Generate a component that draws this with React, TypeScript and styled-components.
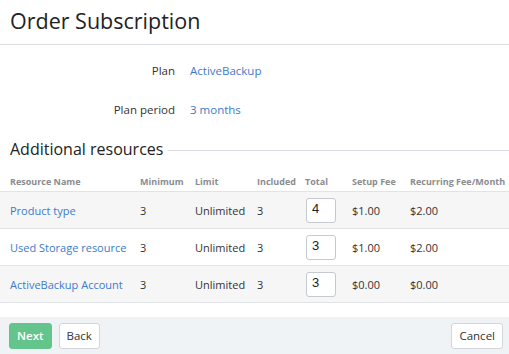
import React from 'react';
import styled, { createGlobalStyle } from "styled-components";

const GlobalStyle = createGlobalStyle`
  body {
    margin: 0;
    font-family: "Open Sans", "Liberation Sans", sans-serif;
    color: #333;
    background: #fff;
  }
`;

interface Resource {
  name: string;
  minimum: string;
  limit: string;
  included: string;
  total: string;
  setupFee: string;
  recurringFee: string;
}

const resources: Resource[] = [
  { name: "Product type", minimum: "3", limit: "Unlimited", included: "3", total: "4", setupFee: "$1.00", recurringFee: "$2.00" },
  { name: "Used Storage resource", minimum: "3", limit: "Unlimited", included: "3", total: "3", setupFee: "$1.00", recurringFee: "$2.00" },
  { name: "ActiveBackup Account", minimum: "3", limit: "Unlimited", included: "3", total: "3", setupFee: "$0.00", recurringFee: "$0.00" },
];

const App = () => {
  return (
    <Page>
      <GlobalStyle/>
      <Header>
        <Title>Order Subscription</Title>
      </Header>

      <Fields>
        <Field>
          <FieldLabel>Plan</FieldLabel>
          <Link>ActiveBackup</Link>
        </Field>
        <Field>
          <FieldLabel>Plan period</FieldLabel>
          <Link>3 months</Link>
        </Field>
      </Fields>

      <Section>
        <SectionTitle>Additional resources</SectionTitle>
        <SectionLine/>
      </Section>

      <Table>
        <HeadRow>
          <span>Resource Name</span>
          <span>Minimum</span>
          <span>Limit</span>
          <span>Included</span>
          <span>Total</span>
          <span>Setup Fee</span>
          <span>Recurring Fee/Month</span>
        </HeadRow>
        {resources.map((r, i) => (
          <Row key={r.name} $striped={i % 2 === 0}>
            <Link>{r.name}</Link>
            <span>{r.minimum}</span>
            <span>{r.limit}</span>
            <span>{r.included}</span>
            <span><TotalInput defaultValue={r.total}/></span>
            <span>{r.setupFee}</span>
            <span>{r.recurringFee}</span>
          </Row>
        ))}
      </Table>

      <Footer>
        <Button $primary>Next</Button>
        <Button>Back</Button>
        <Spacer/>
        <Button>Cancel</Button>
      </Footer>
    </Page>
  );
};

export default App;

const Page = styled.div`
  width: 509px;
  height: 354px;
  display: flex;
  flex-direction: column;
  overflow: hidden;
`;

const Header = styled.div`
  height: 45px;
  border-bottom: 1px solid #dadde3;
  box-sizing: border-box;
  padding: 6px 10px 0;
`;

const Title = styled.h1`
  margin: 0;
  font-size: 21.5px;
  font-weight: 400;
  line-height: 30px;
  color: #222;
`;

const Fields = styled.div`
  display: flex;
  flex-direction: column;
  gap: 19px;
  padding-top: 15px;
`;

const Field = styled.div`
  display: flex;
  align-items: center;
  height: 20px;
  font-size: 11.5px;
`;

const FieldLabel = styled.span`
  width: 175px;
  text-align: right;
  padding-right: 15px;
  color: #333;
`;

const Link = styled.a`
  color: #3c7bcb;
  cursor: pointer;
`;

const Section = styled.div`
  display: flex;
  align-items: center;
  gap: 5px;
  padding: 18px 0 0 10px;
  height: 24px;
`;

const SectionTitle = styled.h2`
  margin: 0;
  font-size: 16px;
  font-weight: 400;
  color: #222;
  white-space: nowrap;
`;

const SectionLine = styled.div`
  flex: 1;
  height: 1px;
  margin-top: 2px;
  background: #dadde3;
`;

const Table = styled.div`
  margin-top: 11px;
  display: flex;
  flex-direction: column;
`;

const columns = "130px 55px 62px 48px 47px 58px 1fr";

const HeadRow = styled.div`
  display: grid;
  grid-template-columns: ${columns};
  align-items: center;
  padding-left: 10px;
  height: 19px;
  border-bottom: 1px solid #e1e3e6;
  font-size: 9px;
  font-weight: 700;
  color: #8a8c90;
  white-space: nowrap;
`;

const Row = styled.div<{ $striped?: boolean }>`
  display: grid;
  grid-template-columns: ${columns};
  align-items: center;
  padding-left: 10px;
  height: 36px;
  border-bottom: 1px solid #e1e3e6;
  background: ${p => p.$striped ? "#f6f6f6" : "#fff"};
  font-size: 11px;
  color: #333;
  white-space: nowrap;
`;

const TotalInput = styled.input`
  box-sizing: border-box;
  width: 30px;
  height: 25px;
  margin-left: 1px;
  border: 1px solid #c5c9d0;
  border-radius: 3px;
  padding: 0 0 3px 5px;
  font-family: "Liberation Sans", Arial, sans-serif;
  font-size: 13px;
  color: #222;
  background: #fff;
`;

const Footer = styled.div`
  margin-top: auto;
  height: 37px;
  box-sizing: border-box;
  background: #f0f3f6;
  display: flex;
  align-items: center;
  gap: 7px;
  padding: 0 6px 0 9px;
`;

const Spacer = styled.div`
  flex: 1;
`;

const Button = styled.button<{ $primary?: boolean }>`
  height: 26px;
  padding: 0 7px;
  border-radius: 3px;
  font-family: "Open Sans", "Liberation Sans", sans-serif;
  font-size: 11.5px;
  cursor: pointer;
  border: 1px solid ${p => p.$primary ? "#63c48c" : "#d3d7dc"};
  background: ${p => p.$primary ? "#63c48c" : "#fff"};
  color: ${p => p.$primary ? "#fff" : "#333"};
  font-weight: ${p => p.$primary ? 600 : 400};
`;
